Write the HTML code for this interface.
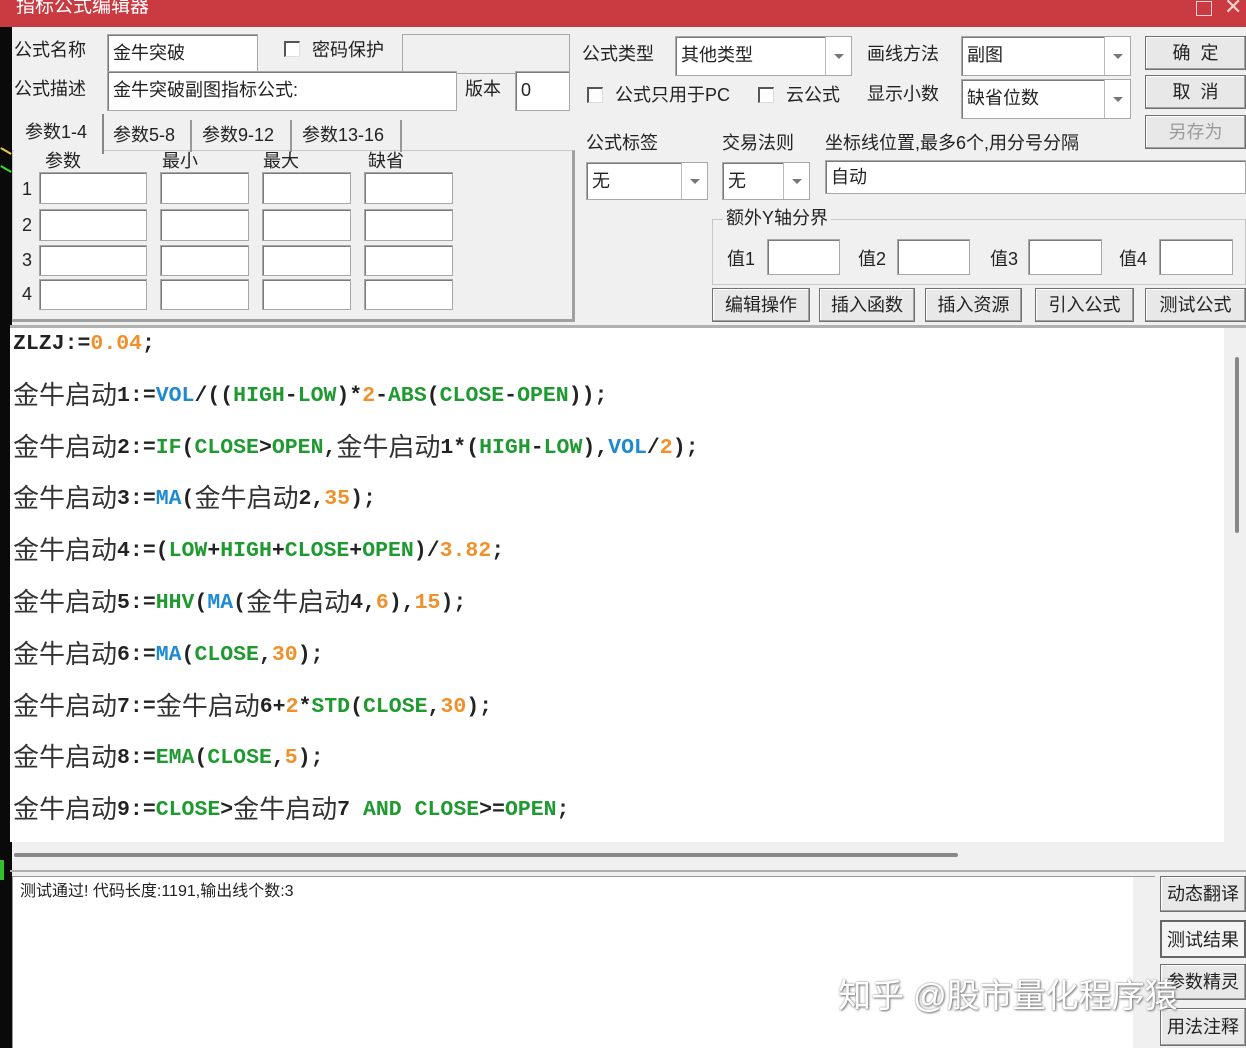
<!DOCTYPE html>
<html><head><meta charset="utf-8"><style>
*{margin:0;padding:0;box-sizing:border-box}
body{width:1246px;height:1048px;overflow:hidden;background:#f0f0f0;position:relative;font-family:"Liberation Sans","Noto Sans CJK SC",sans-serif;font-size:18px;color:#222}
.a{position:absolute}
.lbl{position:absolute;font-size:18px;line-height:22px;white-space:nowrap;color:#222}
.in{position:absolute;background:#fff;border:1px solid #a8a8a8;box-shadow:inset 1px 1px 0 #7a7a7a;font-size:18px;line-height:36px;padding-left:5px;white-space:nowrap}
.cb{position:absolute;width:16px;height:16px;background:#fff;border-top:2px solid #555;border-left:2px solid #555;border-right:1px solid #ddd;border-bottom:1px solid #ddd}
.dd{position:absolute;top:0;bottom:0;right:0;width:26px;border-left:1px solid #bbb;background:#fff}
.dd:after{content:"";position:absolute;left:8px;top:50%;margin-top:-2px;border-left:5px solid transparent;border-right:5px solid transparent;border-top:5px solid #777}
.bt{position:absolute;background:#e8e8e8;border:1px solid #707070;box-shadow:inset -1px -1px 0 #a0a0a0,inset 1px 1px 0 #fff;text-align:center;font-size:18px;white-space:nowrap}
.code{position:absolute;left:10px;top:328px;width:1214px;height:514px;background:#fff;overflow:hidden}
.lines{position:absolute;left:3px;top:-9px;font-family:"Liberation Mono",monospace;font-weight:bold;font-size:21.5px;line-height:51.8px;color:#222;white-space:pre}
.ln{height:51.8px;line-height:51.8px;overflow:visible}
.c{font-family:"Noto Sans CJK SC",sans-serif;font-weight:normal;font-size:26px;color:#333;line-height:1px;position:relative;top:3px}
.g{color:#1e9a30}.b{color:#1e8ad0}.o{color:#f0902a}
</style></head><body>
<div class="a" style="left:0;top:0;width:12px;height:1048px;background:#0a0a0a"></div>
<div class="a" style="left:0;top:150px;width:12px;height:2px;background:#e0d040;transform:rotate(30deg)"></div>
<div class="a" style="left:0;top:168px;width:12px;height:2px;background:#30e030;transform:rotate(30deg)"></div>
<div class="a" style="left:0;top:860px;width:4px;height:20px;background:#30c030"></div>
<div class="a" style="left:0;top:0;width:1246px;height:27px;background:#c93b40"></div>
<div class="lbl" style="left:16px;top:-4px;color:#fff;font-size:19px">指标公式编辑器</div>
<div class="a" style="left:1196px;top:1px;width:16px;height:15px;border:1.5px solid #f4d0d0"></div>
<div class="lbl" style="left:1224px;top:-4px;color:#f4d0d0;font-size:22px">✕</div>

<div class="lbl" style="left:14px;top:39px">公式名称</div>
<div class="in" style="left:107px;top:34px;width:151px;height:40px">金牛突破</div>
<div class="cb" style="left:284px;top:41px"></div>
<div class="lbl" style="left:312px;top:39px">密码保护</div>
<div class="in" style="left:402px;top:34px;width:168px;height:40px;background:#f0f0f0;box-shadow:none"></div>
<div class="lbl" style="left:14px;top:78px">公式描述</div>
<div class="in" style="left:107px;top:71px;width:350px;height:40px">金牛突破副图指标公式:</div>
<div class="lbl" style="left:465px;top:78px">版本</div>
<div class="in" style="left:515px;top:71px;width:55px;height:40px">0</div>

<div class="a" style="left:12px;top:150px;width:563px;height:172px;border:1px solid #c8c8c8;border-right:3px solid #a0a0a0;border-bottom:3px solid #a0a0a0"></div>
<div class="a" style="left:14px;top:114px;width:90px;height:40px;background:#f0f0f0;border-right:2px solid #888"></div>
<div class="lbl" style="left:25px;top:121px">参数1-4</div>
<div class="lbl" style="left:113px;top:124px">参数5-8</div>
<div class="a" style="left:190px;top:120px;width:2px;height:32px;background:#999"></div>
<div class="lbl" style="left:202px;top:124px">参数9-12</div>
<div class="a" style="left:290px;top:120px;width:2px;height:32px;background:#999"></div>
<div class="lbl" style="left:302px;top:124px">参数13-16</div>
<div class="a" style="left:400px;top:120px;width:2px;height:32px;background:#999"></div>
<div class="lbl" style="left:45px;top:150px">参数</div>
<div class="lbl" style="left:162px;top:150px">最小</div>
<div class="lbl" style="left:263px;top:150px">最大</div>
<div class="lbl" style="left:368px;top:150px">缺省</div>
<div class="lbl" style="left:22px;top:178px">1</div>
<div class="lbl" style="left:22px;top:214px">2</div>
<div class="lbl" style="left:22px;top:249px">3</div>
<div class="lbl" style="left:22px;top:283px">4</div>
<div class="in" style="left:39px;top:172px;width:108px;height:32px"></div><div class="in" style="left:160px;top:172px;width:89px;height:32px"></div><div class="in" style="left:262px;top:172px;width:89px;height:32px"></div><div class="in" style="left:364px;top:172px;width:89px;height:32px"></div>
<div class="in" style="left:39px;top:209px;width:108px;height:32px"></div><div class="in" style="left:160px;top:209px;width:89px;height:32px"></div><div class="in" style="left:262px;top:209px;width:89px;height:32px"></div><div class="in" style="left:364px;top:209px;width:89px;height:32px"></div>
<div class="in" style="left:39px;top:245px;width:108px;height:31px"></div><div class="in" style="left:160px;top:245px;width:89px;height:31px"></div><div class="in" style="left:262px;top:245px;width:89px;height:31px"></div><div class="in" style="left:364px;top:245px;width:89px;height:31px"></div>
<div class="in" style="left:39px;top:279px;width:108px;height:31px"></div><div class="in" style="left:160px;top:279px;width:89px;height:31px"></div><div class="in" style="left:262px;top:279px;width:89px;height:31px"></div><div class="in" style="left:364px;top:279px;width:89px;height:31px"></div>

<div class="lbl" style="left:582px;top:43px">公式类型</div>
<div class="in" style="left:675px;top:36px;width:177px;height:40px">其他类型<div class="dd"></div></div>
<div class="lbl" style="left:867px;top:43px">画线方法</div>
<div class="in" style="left:961px;top:36px;width:170px;height:40px">副图<div class="dd"></div></div>
<div class="bt" style="left:1145px;top:36px;width:101px;height:34px;line-height:32px">确&nbsp;&nbsp;定</div>
<div class="bt" style="left:1145px;top:75px;width:101px;height:34px;line-height:32px">取&nbsp;&nbsp;消</div>
<div class="bt" style="left:1145px;top:115px;width:101px;height:34px;line-height:32px;color:#9a9a9a">另存为</div>
<div class="cb" style="left:587px;top:87px"></div>
<div class="lbl" style="left:615px;top:84px">公式只用于PC</div>
<div class="cb" style="left:758px;top:87px"></div>
<div class="lbl" style="left:786px;top:84px">云公式</div>
<div class="lbl" style="left:867px;top:83px">显示小数</div>
<div class="in" style="left:961px;top:79px;width:170px;height:40px">缺省位数<div class="dd"></div></div>
<div class="lbl" style="left:586px;top:132px">公式标签</div>
<div class="lbl" style="left:722px;top:132px">交易法则</div>
<div class="lbl" style="left:825px;top:132px">坐标线位置,最多6个,用分号分隔</div>
<div class="in" style="left:586px;top:162px;width:122px;height:38px">无<div class="dd"></div></div>
<div class="in" style="left:722px;top:162px;width:88px;height:38px">无<div class="dd"></div></div>
<div class="in" style="left:825px;top:160px;width:421px;height:34px;line-height:32px">自动</div>
<div class="a" style="left:712px;top:219px;width:534px;height:66px;border:1px solid #c8c8c8"></div>
<div class="lbl" style="left:723px;top:207px;background:#f0f0f0;padding:0 3px">额外Y轴分界</div>
<div class="lbl" style="left:727px;top:248px">值1</div><div class="in" style="left:767px;top:239px;width:73px;height:36px"></div>
<div class="lbl" style="left:858px;top:248px">值2</div><div class="in" style="left:897px;top:239px;width:73px;height:36px"></div>
<div class="lbl" style="left:990px;top:248px">值3</div><div class="in" style="left:1028px;top:239px;width:74px;height:36px"></div>
<div class="lbl" style="left:1119px;top:248px">值4</div><div class="in" style="left:1159px;top:239px;width:74px;height:36px"></div>
<div class="bt" style="left:712px;top:288px;width:98px;height:34px;line-height:32px">编辑操作</div>
<div class="bt" style="left:819px;top:288px;width:96px;height:34px;line-height:32px">插入函数</div>
<div class="bt" style="left:925px;top:288px;width:97px;height:34px;line-height:32px">插入资源</div>
<div class="bt" style="left:1035px;top:288px;width:99px;height:34px;line-height:32px">引入公式</div>
<div class="bt" style="left:1145px;top:288px;width:101px;height:34px;line-height:32px">测试公式</div>

<div class="a" style="left:10px;top:325px;width:1236px;height:3px;background:#b0b0b0"></div>
<div class="code"><div class="lines"><div class="ln">ZLZJ:=<span class="o">0.04</span>;</div><div class="ln"><span class="c">金牛启动</span>1:=<span class="b">VOL</span>/((<span class="g">HIGH</span>-<span class="g">LOW</span>)*<span class="o">2</span>-<span class="g">ABS</span>(<span class="g">CLOSE</span>-<span class="g">OPEN</span>));</div><div class="ln"><span class="c">金牛启动</span>2:=<span class="g">IF</span>(<span class="g">CLOSE</span>&gt;<span class="g">OPEN</span>,<span class="c">金牛启动</span>1*(<span class="g">HIGH</span>-<span class="g">LOW</span>),<span class="b">VOL</span>/<span class="o">2</span>);</div><div class="ln"><span class="c">金牛启动</span>3:=<span class="b">MA</span>(<span class="c">金牛启动</span>2,<span class="o">35</span>);</div><div class="ln"><span class="c">金牛启动</span>4:=(<span class="g">LOW</span>+<span class="g">HIGH</span>+<span class="g">CLOSE</span>+<span class="g">OPEN</span>)/<span class="o">3.82</span>;</div><div class="ln"><span class="c">金牛启动</span>5:=<span class="g">HHV</span>(<span class="b">MA</span>(<span class="c">金牛启动</span>4,<span class="o">6</span>),<span class="o">15</span>);</div><div class="ln"><span class="c">金牛启动</span>6:=<span class="b">MA</span>(<span class="g">CLOSE</span>,<span class="o">30</span>);</div><div class="ln"><span class="c">金牛启动</span>7:=<span class="c">金牛启动</span>6+<span class="o">2</span>*<span class="g">STD</span>(<span class="g">CLOSE</span>,<span class="o">30</span>);</div><div class="ln"><span class="c">金牛启动</span>8:=<span class="g">EMA</span>(<span class="g">CLOSE</span>,<span class="o">5</span>);</div><div class="ln"><span class="c">金牛启动</span>9:=<span class="g">CLOSE</span>&gt;<span class="c">金牛启动</span>7 <span class="g">AND</span> <span class="g">CLOSE</span>&gt;=<span class="g">OPEN</span>;</div></div></div>
<div class="a" style="left:1224px;top:328px;width:22px;height:514px;background:#f0f0f0"></div>
<div class="a" style="left:1235px;top:357px;width:4px;height:176px;background:#888;border-radius:2px"></div>
<div class="a" style="left:14px;top:853px;width:944px;height:4px;background:#888;border-radius:2px"></div>
<div class="a" style="left:10px;top:870px;width:1236px;height:2px;background:#b0b0b0"></div>

<div class="a" style="left:12px;top:876px;width:1143px;height:172px;background:#fff;border-top:1px solid #999;border-left:1px solid #999"></div>
<div class="a" style="left:1133px;top:877px;width:22px;height:171px;background:#f0f0f0"></div>
<div class="lbl" style="left:20px;top:881px;font-size:16px">测试通过! 代码长度:1191,输出线个数:3</div>
<div class="bt" style="left:1160px;top:876px;width:86px;height:36px;line-height:34px">动态翻译</div>
<div class="bt" style="left:1160px;top:920px;width:86px;height:38px;line-height:36px;background:#f4f4f4;border:2px solid #666;box-shadow:none">测试结果</div>
<div class="bt" style="left:1160px;top:964px;width:86px;height:36px;line-height:34px">参数精灵</div>
<div class="bt" style="left:1160px;top:1008px;width:86px;height:38px;line-height:36px">用法注释</div>
<div class="lbl" style="left:838px;top:976px;font-size:33px;line-height:40px;color:#fff;text-shadow:1px 1px 2px #777,0 0 2px #999">知乎 @股市量化程序猿</div>
</body></html>
